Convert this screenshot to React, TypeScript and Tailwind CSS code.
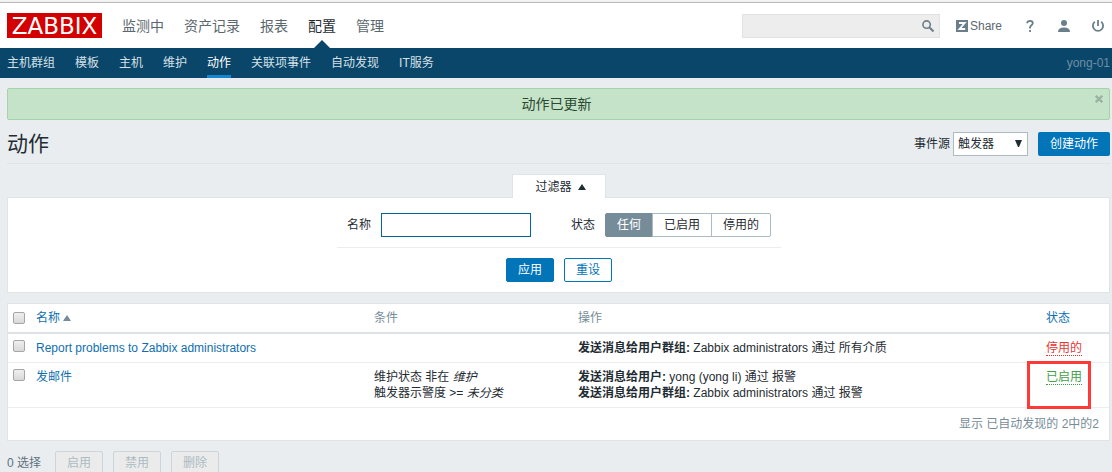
import React, { useState } from "react";

const mainMenu = ["监测中", "资产记录", "报表", "配置", "管理"];
const subMenu = ["主机群组", "模板", "主机", "维护", "动作", "关联项事件", "自动发现", "IT服务"];
const statusOptions = ["任何", "已启用", "停用的"];
const bulkActions = ["启用", "禁用", "删除"];

type Action = {
  name: string;
  conditions: { text: string; value: string }[];
  operations: { label: string; target: string }[];
  enabled: boolean;
  highlighted?: boolean;
};

const actions: Action[] = [
  {
    name: "Report problems to Zabbix administrators",
    conditions: [],
    operations: [{ label: "发送消息给用户群组:", target: "Zabbix administrators 通过 所有介质" }],
    enabled: false,
  },
  {
    name: "发邮件",
    conditions: [
      { text: "维护状态 非在", value: "维护" },
      { text: "触发器示警度 >=", value: "未分类" },
    ],
    operations: [
      { label: "发送消息给用户:", target: "yong (yong li) 通过 报警" },
      { label: "发送消息给用户群组:", target: "Zabbix administrators 通过 报警" },
    ],
    enabled: true,
    highlighted: true,
  },
];

const Checkbox: React.FC<{ label: string }> = ({ label }) => (
  <input
    type="checkbox"
    aria-label={label}
    className="block size-3 appearance-none rounded-xs border border-[#a6a6a6] bg-linear-to-b from-[#efefef] to-[#d9d9d9] checked:from-[#0275b8] checked:to-[#0275b8]"
  />
);

const Header: React.FC = () => (
  <header className="flex h-[45px] items-center bg-white pr-2 pl-[7px]">
    <a
      href="#home"
      className="flex h-[25px] w-[95px] items-center justify-center bg-[#d40000] font-['DejaVu_Sans',sans-serif] text-[23px] leading-6 text-white"
    >
      ZABBIX
    </a>
    <nav className="ml-5 flex gap-5 self-stretch text-sm">
      {mainMenu.map((item) => (
        <a
          key={item}
          href="#menu"
          className={item === "配置" ? "relative flex items-center text-[#1f2c33]" : "flex items-center text-[#5b686f]"}
        >
          {item}
          {item === "配置" && (
            <svg className="absolute bottom-0 left-1/2 -translate-x-1/2" width="16" height="8" viewBox="0 0 16 8">
              <path d="M0 8 8 0l8 8z" fill="#0a466a" />
            </svg>
          )}
        </a>
      ))}
    </nav>
    <form className="relative ml-auto" onSubmit={(e) => e.preventDefault()}>
      <input
        type="text"
        aria-label="搜索"
        className="block h-6 w-[198px] border border-[#e2e2e2] bg-[#ededed] pr-7 pl-1 outline-none"
      />
      <button type="submit" aria-label="搜索" className="absolute inset-y-0 right-0 flex w-6 items-center justify-center">
        <svg width="12" height="12" viewBox="0 0 12 12" fill="none" stroke="#6b7f8a">
          <circle cx="4.6" cy="4.6" r="3.7" strokeWidth="1.6" />
          <path d="m7.5 7.5 4 4" strokeWidth="2" />
        </svg>
      </button>
    </form>
    <a href="#share" className="ml-4 flex items-center gap-[2px] text-[#5b686f]">
      <svg width="12" height="12" viewBox="0 0 12 12">
        <path fill="#6b7f8a" d="M0 0h12v12H0z" />
        <path d="M3 3h5.700L3.500 9H9.200" fill="none" stroke="#fff" strokeWidth="1.8" />
      </svg>
      Share
    </a>
    <a href="#help" aria-label="帮助" className="ml-6">
      <svg width="8" height="12" viewBox="0 0 8 12" fill="none" stroke="#6b7f8a" strokeWidth="1.8">
        <path d="M1.2 3.3C1.2 1.8 2.4.9 4 .9s2.8.9 2.8 2.4C6.8 5.2 4 5.400 4 7.600v.8" />
        <path d="M4 10v2" />
      </svg>
    </a>
    <a href="#profile" aria-label="用户" className="ml-6">
      <svg width="12" height="12" viewBox="0 0 12 12" fill="#6b7f8a">
        <circle cx="6" cy="3" r="3" />
        <path d="M0 12c0-3 2-4.500 6-4.500s6 1.500 6 4.500z" />
      </svg>
    </a>
    <a href="#logout" aria-label="退出" className="ml-[22px]">
      <svg width="12" height="12" viewBox="0 0 12 12" fill="none" stroke="#6b7f8a" strokeWidth="1.8">
        <path d="M2.800 1.800a5.100 5.100 0 1 0 6.400 0M6 0v6" />
      </svg>
    </a>
  </header>
);

const App: React.FC = () => {
  const [status, setStatus] = useState("任何");
  const [showMessage, setShowMessage] = useState(true);
  const [filterOpen, setFilterOpen] = useState(true);

  return (
    <div className="h-screen overflow-hidden bg-[#e9edf0] font-['Liberation_Sans','Noto_Sans_CJK_SC',sans-serif] text-xs leading-4 text-[#1f2c33]">
      <div className="h-[3px] border-b border-[#b8b8b8] bg-[#f2f2f2]" />
      <Header />

      <nav className="flex h-[30px] gap-5 bg-[#0a466a] pr-[2px] pl-[7px] text-[#d5e0e7]">
        {subMenu.map((item) => (
          <a
            key={item}
            href="#section"
            className={
              item === "动作"
                ? "flex items-center border-y-3 border-transparent border-b-[#1485d0] text-white"
                : "flex items-center border-y-3 border-transparent"
            }
          >
            {item}
          </a>
        ))}
        <span className="ml-auto flex items-center text-[#6d8fa3]">yong-01</span>
      </nav>

      <main className="pt-[10px] pr-[2px] pl-[7px]">
        {showMessage && (
          <div className="relative flex h-8 items-center justify-center rounded-xs border border-[#a3d4a8] bg-[#c5e3c8] pr-1 text-sm text-[#2a4a30]">
            动作已更新
            <button
              type="button"
              aria-label="关闭"
              onClick={() => setShowMessage(false)}
              className="absolute top-[6px] right-[6px]"
            >
              <svg width="8" height="8" viewBox="0 0 8 8" stroke="#9bb3a3" strokeWidth="2.4">
                <path d="m.8.8 6.400 6.400M7.200.8.8 7.200" />
              </svg>
            </button>
          </div>
        )}

        <div className="flex h-11 items-center border-b border-[#dfe4e7] pt-1">
          <h1 className="text-[21px] leading-6">动作</h1>
          <label htmlFor="source" className="ml-auto">
            事件源
          </label>
          <div className="relative ml-[3px]">
            <select
              id="source"
              className="block h-6 w-[75px] appearance-none border border-[#acbbc2] bg-white pl-1 outline-none"
            >
              <option>触发器</option>
            </select>
            <svg className="pointer-events-none absolute top-2 right-[6px]" width="7" height="7" viewBox="0 0 7 7">
              <path d="M0 0h7L4 7H3z" fill="#1f2c33" />
            </svg>
          </div>
          <button type="button" className="ml-[10px] h-6 rounded-xs bg-[#0275b8] px-3 text-white">
            创建动作
          </button>
        </div>

        <div className="mt-[10px] flex justify-center">
          <button
            type="button"
            onClick={() => setFilterOpen(!filterOpen)}
            className="relative -mb-px flex h-6 w-[94px] items-center justify-center gap-[6px] border border-b-0 border-[#dfe4e7] bg-white pl-1"
          >
            过滤器
            <svg width="8" height="6" viewBox="0 0 8 6">
              <path d="M0 6 4 0l4 6z" fill="#1f2c33" />
            </svg>
          </button>
        </div>
        {filterOpen && (
          <form
            className="flex flex-col items-center border border-[#dfe4e7] bg-white pt-[15px] pb-[10px] pl-px"
            onSubmit={(e) => e.preventDefault()}
          >
            <div className="flex items-center border-b border-[#ebeef0] px-[10px] pb-[10px]">
              <label htmlFor="name">名称</label>
              <input
                id="name"
                type="text"
                className="ml-[10px] h-6 w-[150px] border border-[#00659c] bg-white px-1 outline-none"
              />
              <fieldset className="ml-10 flex items-center">
                <legend className="float-left mr-[10px]">状态</legend>
                <div className="flex h-6">
                  {statusOptions.map((option) => (
                    <label
                      key={option}
                      className="-ml-px flex cursor-pointer items-center border border-[#acbbc2] px-[11px] first:ml-0 first:rounded-l-xs last:rounded-r-xs has-checked:border-[#768d99] has-checked:bg-[#768d99] has-checked:text-white"
                    >
                      <input
                        type="radio"
                        name="status"
                        className="sr-only"
                        checked={status === option}
                        onChange={() => setStatus(option)}
                      />
                      {option}
                    </label>
                  ))}
                </div>
              </fieldset>
            </div>
            <div className="mt-[10px] flex gap-[10px]">
              <button type="submit" className="h-6 rounded-xs border border-[#0275b8] bg-[#0275b8] px-[11px] text-white">
                应用
              </button>
              <button type="reset" className="h-6 rounded-xs border border-[#0275b8] bg-white px-[11px] text-[#0275b8]">
                重设
              </button>
            </div>
          </form>
        )}

        <div className="mt-[10px] border border-[#dfe4e7] bg-white">
          <table className="w-full table-fixed border-collapse text-left">
            <colgroup>
              <col className="w-[23px]" />
              <col className="w-[338px]" />
              <col className="w-[204px]" />
              <col />
              <col className="w-[68px]" />
            </colgroup>
            <thead>
              <tr className="h-[29px] border-b-2 border-[#dce2e5] text-[#768d99]">
                <th className="px-[5px]">
                  <Checkbox label="全选" />
                </th>
                <th className="px-[5px] font-normal">
                  <a href="#sort-name" className="flex items-center gap-[3px] text-[#0f6fae]">
                    名称
                    <svg width="8" height="6" viewBox="0 0 8 6">
                      <path d="M0 6 4 0l4 6z" fill="#768d99" />
                    </svg>
                  </a>
                </th>
                <th className="px-[5px] font-normal">条件</th>
                <th className="px-[5px] font-normal">操作</th>
                <th className="px-[5px] font-normal">
                  <a href="#sort-status" className="text-[#0f6fae]">
                    状态
                  </a>
                </th>
              </tr>
            </thead>
            <tbody>
              {actions.map((action) => (
                <tr key={action.name} className="border-b border-[#ebeef0] align-top">
                  <td className="px-[5px] py-[6px]">
                    <Checkbox label={action.name} />
                  </td>
                  <td className="px-[5px] py-[6px]">
                    <a href="#edit" className="text-[#0f6fae]">
                      {action.name}
                    </a>
                  </td>
                  <td className="px-[5px] py-[6px]">
                    {action.conditions.map((condition) => (
                      <div key={condition.value}>
                        {condition.text} <em>{condition.value}</em>
                      </div>
                    ))}
                  </td>
                  <td className="px-[5px] py-[6px]">
                    {action.operations.map((operation) => (
                      <div key={operation.label}>
                        <b>{operation.label}</b> {operation.target}
                      </div>
                    ))}
                  </td>
                  <td className="relative px-[5px] py-[6px]">
                    <a
                      href="#toggle"
                      className={
                        action.enabled
                          ? "inline-block h-4 border-b border-dotted border-[#429e47] text-[#429e47]"
                          : "inline-block h-4 border-b border-dotted border-[#e33734] text-[#e33734]"
                      }
                    >
                      {action.enabled ? "已启用" : "停用的"}
                    </a>
                    {action.highlighted && (
                      <div className="pointer-events-none absolute -inset-y-[2px] right-[18px] -left-[14px] border-3 border-[#ff3838]" />
                    )}
                  </td>
                </tr>
              ))}
            </tbody>
          </table>
          <p className="px-[10px] py-2 text-right text-[#768d99]">显示 已自动发现的 2中的2</p>
        </div>

        <div className="mt-[10px] flex items-center gap-[10px]">
          <span className="mr-1 text-[#5e737e]">0 选择</span>
          {bulkActions.map((label) => (
            <button
              key={label}
              type="button"
              disabled
              className="h-6 rounded-xs border border-[#ccd5d9] bg-[#ebebeb] px-[11px] text-[#acbbc2]"
            >
              {label}
            </button>
          ))}
        </div>
      </main>
    </div>
  );
};

export default App;
